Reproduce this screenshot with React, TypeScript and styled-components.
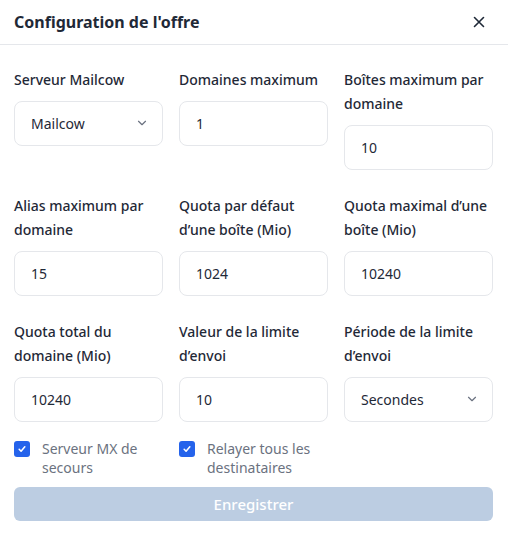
import styled, { createGlobalStyle } from "styled-components";

const GlobalStyle = createGlobalStyle`
  * { box-sizing: border-box; }
  body {
    margin: 0;
    background: #ffffff;
    font-family: "Noto Sans", "Open Sans", sans-serif;
    color: #111827;
  }
`;

const Panel = styled.div`
  width: 508px;
  background: #fff;
`;

const Header = styled.div`
  display: flex;
  align-items: center;
  justify-content: space-between;
  height: 45px;
  padding: 0 14px;
  border-bottom: 1px solid #e5e7eb;
`;

const Title = styled.h2`
  margin: 0;
  font-size: 16px;
  font-weight: 700;
  color: #1f2937;
`;

const CloseButton = styled.button`
  border: none;
  background: none;
  padding: 0;
  width: 20px;
  height: 20px;
  display: flex;
  align-items: center;
  justify-content: center;
  color: #1f2937;
  margin-right: 5px;
`;

const Body = styled.div`
  padding: 23px 15px 22px 14px;
  display: flex;
  flex-direction: column;
`;

const Grid = styled.div`
  display: grid;
  grid-template-columns: repeat(3, 1fr);
  column-gap: 16px;
  row-gap: 24px;
  align-items: start;
`;

const Field = styled.div`
  display: flex;
  flex-direction: column;
`;

const Label = styled.label`
  font-size: 14px;
  line-height: 24px;
  font-weight: 500;
  color: #1f2937;
  margin-bottom: 9px;
`;

const Box = styled.div`
  height: 45px;
  border: 1px solid #e5e7eb;
  border-radius: 8px;
  display: flex;
  align-items: center;
  justify-content: space-between;
  padding: 0 13px 1px 16px;
  font-size: 14px;
  color: #1f2937;
`;

const Checks = styled.div`
  display: grid;
  grid-template-columns: repeat(3, 1fr);
  column-gap: 16px;
  margin-top: 17px;
`;

const CheckItem = styled.label`
  display: flex;
  align-items: flex-start;
  gap: 12px;
  font-size: 14px;
  line-height: 19px;
  color: #6b7280;
`;

const CheckBox = styled.span`
  flex: none;
  width: 16px;
  height: 16px;
  margin-top: 2px;
  border-radius: 3px;
  background: #2563eb;
  display: flex;
  align-items: center;
  justify-content: center;
`;

const SaveButton = styled.button`
  margin-top: 10px;
  height: 34px;
  width: 100%;
  border: none;
  border-radius: 6px;
  background: #bccde2;
  color: #fff;
  font-family: inherit;
  font-size: 15px;
  font-weight: 500;
`;

const Chevron = () => (
  <svg width="14" height="14" viewBox="0 0 24 24" fill="none" stroke="#6b7280" strokeWidth="2" strokeLinecap="round" strokeLinejoin="round">
    <path d="M6 9l6 6 6-6" />
  </svg>
);

const Tick = () => (
  <svg width="10" height="10" viewBox="0 0 16 16" fill="none" stroke="#fff" strokeWidth="2.5" strokeLinecap="round" strokeLinejoin="round">
    <path d="M3.5 8.5l3 3 6-7" />
  </svg>
);

type FieldDef = { label: string; value: string; select?: boolean };

const fields: FieldDef[] = [
  { label: "Serveur Mailcow", value: "Mailcow", select: true },
  { label: "Domaines maximum", value: "1" },
  { label: "Boîtes maximum par domaine", value: "10" },
  { label: "Alias maximum par domaine", value: "15" },
  { label: "Quota par défaut d’une boîte (Mio)", value: "1024" },
  { label: "Quota maximal d’une boîte (Mio)", value: "10240" },
  { label: "Quota total du domaine (Mio)", value: "10240" },
  { label: "Valeur de la limite d’envoi", value: "10" },
  { label: "Période de la limite d’envoi", value: "Secondes", select: true },
];

export default function App() {
  return (
    <>
      <GlobalStyle />
      <Panel>
        <Header>
          <Title>Configuration de l'offre</Title>
          <CloseButton aria-label="Fermer">
            <svg width="12" height="12" viewBox="0 0 12 12" stroke="#1f2937" strokeWidth="1.6" strokeLinecap="round">
              <path d="M1.5 1.5l9 9M10.5 1.5l-9 9" />
            </svg>
          </CloseButton>
        </Header>
        <Body>
          <Grid>
            {fields.map((f) => (
              <Field key={f.label}>
                <Label>{f.label}</Label>
                <Box>
                  <span>{f.value}</span>
                  {f.select && <Chevron />}
                </Box>
              </Field>
            ))}
          </Grid>
          <Checks>
            <CheckItem>
              <CheckBox><Tick /></CheckBox>
              Serveur MX de secours
            </CheckItem>
            <CheckItem>
              <CheckBox><Tick /></CheckBox>
              Relayer tous les destinataires
            </CheckItem>
          </Checks>
          <SaveButton disabled>Enregistrer</SaveButton>
        </Body>
      </Panel>
    </>
  );
}
